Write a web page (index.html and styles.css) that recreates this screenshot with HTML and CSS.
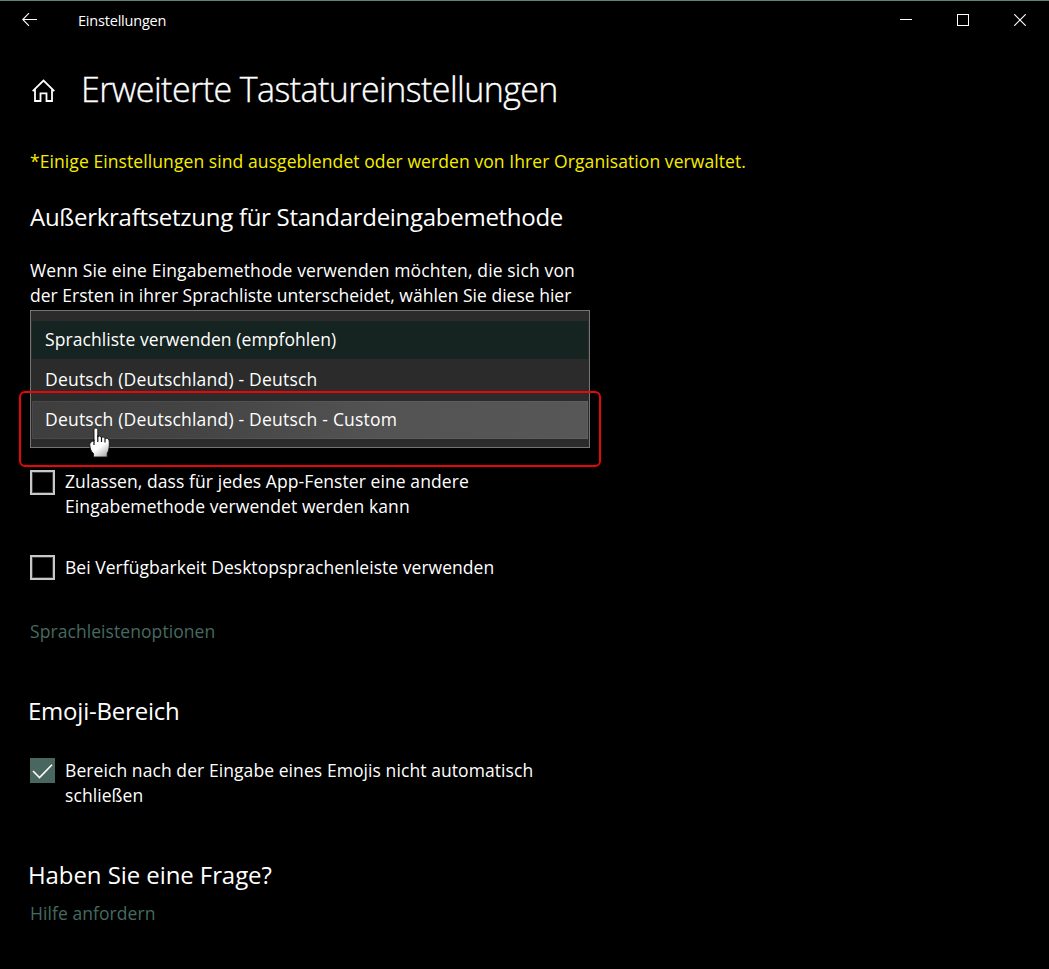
FILE: index.html
```html
<!DOCTYPE html>
<html lang="de">
<head>
<meta charset="utf-8">
<title>Einstellungen</title>
<link rel="stylesheet" href="styles.css">
</head>
<body>
<div class="window">
  <header class="titlebar">
    <svg class="back line" width="16" height="14" viewBox="0 0 16 14"><path d="M15 6.500H.8M7 .2.7 6.500 7 12.800"/></svg>
    <span class="app-name">Einstellungen</span>
    <div class="controls">
      <svg class="line" width="12" height="12" viewBox="0 0 12 12"><path d="M0 5.5h12" shape-rendering="crispEdges"/></svg>
      <svg class="line" width="12" height="12" viewBox="0 0 12 12"><path d="M.5.5h11v11H.5z" shape-rendering="crispEdges"/></svg>
      <svg class="line" width="12" height="12" viewBox="0 0 12 12"><path d="M.2.2 11.8 11.8M11.8.2.2 11.8"/></svg>
    </div>
  </header>
  <main class="content">
    <div class="page-head">
      <svg class="home line" width="24" height="24" viewBox="0 0 24 24"><path d="M.7 12.200 11.500 1.600 22.300 12.200M3 10.200V22h5.500v-7.700h6V22H20V10.200"/></svg>
      <h1>Erweiterte Tastatureinstellungen</h1>
    </div>
    <p class="notice">*Einige Einstellungen sind ausgeblendet oder werden von Ihrer Organisation verwaltet.</p>

    <h2 class="h-override">Außerkraftsetzung für Standardeingabemethode</h2>
    <p class="description"><span class="line-a">Wenn Sie eine Eingabemethode verwenden möchten, die sich von</span><br><span class="line-b">der Ersten in ihrer Sprachliste unterscheidet, wählen Sie diese hier</span></p>
    <div class="dropdown">
      <div class="option selected">Sprachliste verwenden (empfohlen)</div>
      <div class="option wide">Deutsch (Deutschland) - Deutsch</div>
      <div class="option wide hover">Deutsch (Deutschland) - Deutsch - Custom</div>
      <div class="highlight"></div>
      <svg class="pointer" width="22" height="32" viewBox="0 0 22 32">
        <defs><linearGradient id="glove" x1=".3" y1="0" x2=".8" y2="1"><stop offset=".6" stop-color="#fff"/><stop offset="1" stop-color="#aaa"/></linearGradient></defs>
        <path fill="url(#glove)" stroke="#111" stroke-width=".9" d="M5 3.200C5 .4 8.800.4 8.800 3.200V10c.8-1.400 3.200-1.200 3.700.8.900-1.200 3-.8 3.500.9 1-1 3.500-.4 4 1.500.6 3 .5 7-.6 10.500L18.200 26.500V30H4.500v-3.500C2 24.500.8 21 .8 17.500c0-2 1.800-3.500 4.200-3.500z"/>
        <path fill="none" stroke="#111" stroke-width="1.200" d="M8.800 8.500V15M12.500 10V15M16 11.500v4M5 12.500V18"/>
      </svg>
    </div>

    <div class="check-row">
      <span class="box"></span>
      <p><span class="line-c">Zulassen, dass für jedes App-Fenster eine andere</span><br><span class="line-d">Eingabemethode verwendet werden kann</span></p>
    </div>
    <div class="check-row single">
      <span class="box"></span>
      <p class="line-e">Bei Verfügbarkeit Desktopsprachenleiste verwenden</p>
    </div>
    <a class="link link-options">Sprachleistenoptionen</a>

    <h2 class="h-emoji">Emoji-Bereich</h2>
    <div class="check-row emoji">
      <span class="box checked"><svg class="line" width="25" height="25" viewBox="0 0 25 25"><path d="m3 13 6.500 6.500L22 6.800"/></svg></span>
      <p>Bereich nach der Eingabe eines Emojis nicht automatisch<br>schließen</p>
    </div>

    <h2 class="h-help">Haben Sie eine Frage?</h2>
    <a class="link link-help">Hilfe anfordern</a>
  </main>
</div>
</body>
</html>
```

FILE: styles.css
```css
* { box-sizing: border-box; }
body { margin: 0; background: #000; }
h1, h2, p { margin: 0; font-weight: 400; }

.window {
  height: 969px;
  overflow: hidden;
  border-top: 1px solid #5e8479;
  background: #000;
  color: #fff;
  font: 17.5px/25px "Open Sans", "Noto Sans", sans-serif;
  letter-spacing: .08px;
  white-space: nowrap;
}
.line path { fill: none; stroke: #fff; stroke-width: 1.15; }

.titlebar {
  display: flex;
  align-items: center;
  height: 38px;
  padding: 0 23px 0 22px;
}
.back { margin-right: 40px; }
.app-name { font-size: 14.5px; letter-spacing: -.2px; }
.controls { display: flex; gap: 45px; margin-left: auto; }

.content { padding: 30px 30px 0; }
.page-head { display: flex; align-items: center; height: 40px; }
.home { margin: 4px 25px 0 2px; }
.home path { stroke-width: 1.8; }
h1 {
  font-size: 34px;
  font-weight: 300;
  line-height: 40px;
  letter-spacing: -.57px;
  -webkit-text-stroke: .35px #fff;
}
.notice { margin-top: 40px; color: #f6ee00; line-height: 24px; letter-spacing: .085px; }

h2 { font-size: 24px; line-height: 32px; }
.h-override { margin-top: 28px; letter-spacing: -.28px; }
.description { margin-top: 25px; }
.line-a { letter-spacing: .145px; }
.line-b { letter-spacing: .015px; }
.line-c { letter-spacing: .08px; }
.line-d { letter-spacing: .1px; }
.line-e { letter-spacing: .04px; }

.dropdown {
  position: relative;
  display: flex;
  flex-direction: column;
  width: 560px;
  height: 138px;
  margin-top: 2px;
  padding: 10px 1px 8px;
  border: 1px solid #757575;
  background: #2b2b2b;
}
.option { height: 38px; padding-left: 13px; line-height: 36px; }
.option + .option { margin-top: 2px; }
.option.wide { letter-spacing: .21px; }
.option.selected { background: #162421; letter-spacing: .07px; }
.option.hover {
  background: linear-gradient(100deg, #3e3e3e 0, #444 30%, #535353 62%, #575757);
  box-shadow: inset 0 0 0 1px rgba(150, 150, 150, .12);
}
.highlight {
  position: absolute;
  left: -12px;
  top: 80px;
  width: 582px;
  height: 76px;
  border: 2px solid #e90606;
  border-radius: 6px;
}
.pointer { position: absolute; left: 58px; top: 116px; }

.check-row { display: flex; gap: 10px; margin-top: 21px; }
.box { width: 25px; height: 25px; flex: none; border: 2px solid #c8c8c8; box-shadow: inset 0 0 0 1px #3b3b3b; }
.check-row .box { margin-top: 1px; }
.box.checked { border: 0; background: #49675f; box-shadow: none; }
.box svg { display: block; }
.box path { stroke-width: 1.6; }
.single { margin-top: 36px; }
.single .box { margin-top: 0; }

.link { display: block; width: max-content; color: #456b60; letter-spacing: .07px; }
.link-options { margin-top: 39px; }
.h-emoji { margin: 51px 0 0 -2px; letter-spacing: -.22px; }
.emoji { margin-top: 31px; }
.emoji .box { margin-top: 0; }
.h-help { margin: 51px 0 0 -2px; letter-spacing: -.08px; }
.link-help { margin-top: 10px; }
```
